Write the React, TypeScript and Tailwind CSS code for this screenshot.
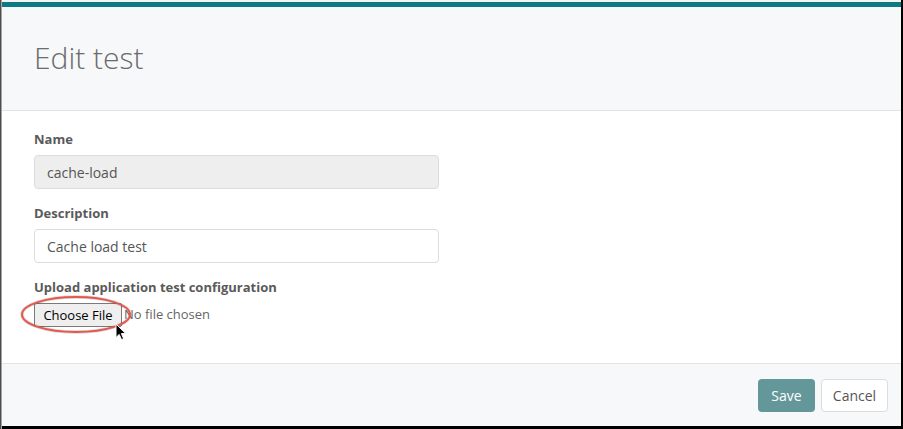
import React from "react";

const font = { fontFamily: '"Open Sans", "Liberation Sans", sans-serif' };

function Field({ label, value, disabled }: { label: string; value: string; disabled?: boolean }) {
  return (
    <div className="flex flex-col mb-[15px]">
      <label className="text-[13px] leading-[18px] font-bold text-[#5a5a5a] mb-[7px]">{label}</label>
      <div
        className={`w-[405px] h-[34px] rounded-[4px] border border-[#dcdcdc] px-[12px] flex items-center text-[14px] text-[#555] ${
          disabled ? "bg-[#eeeeee]" : "bg-white"
        }`}
      >
        {value}
      </div>
    </div>
  );
}

export default function App() {
  return (
    <div style={font} className="w-[903px] h-[429px] flex bg-white overflow-hidden">
      {/* left window edge */}
      <div className="w-[1px] bg-[#4d4d4d]" />
      <div className="w-[1px] bg-[#a3a3a3]" />

      <div className="flex-1 flex flex-col border-b-[3px] border-black">
        <div className="h-[2px] bg-[#f4f4f4]" />
        <div className="h-[5px] bg-[#0b7a83]" />

        {/* Header */}
        <div className="h-[104px] bg-[#f7f8fa] border-b border-[#e3e3e3] pl-[32px] pt-[33px]">
          <h1 className="text-[30px] leading-[36px] font-light text-[#6b6b6b]">Edit test</h1>
        </div>

        {/* Body */}
        <div className="flex-1 pl-[32px] pt-[19px]">
          <Field label="Name" value="cache-load" disabled />
          <Field label="Description" value="Cache load test" />
          <div className="flex flex-col">
            <label className="text-[13px] leading-[18px] font-bold text-[#5a5a5a] mb-[6px]">
              Upload application test configuration
            </label>
            <div className="flex items-center gap-[2px]">
              <div className="relative">
                <button className="w-[88px] h-[24px] rounded-[2px] border border-[#7a7a7a] bg-[#efefef] text-[13px] leading-[22px] text-black">
                  Choose File
                </button>
                <svg
                  className="absolute left-[-14px] top-[-7px] pointer-events-none"
                  width="112"
                  height="39"
                  viewBox="0 0 112 39"
                >
                  <ellipse cx="56" cy="19.5" rx="54" ry="17.5" fill="none" stroke="#000" strokeOpacity="0.15" strokeWidth="3.5" />
                  <ellipse cx="56" cy="19.5" rx="54" ry="17.5" fill="none" stroke="#e8574d" strokeWidth="2" />
                </svg>
                <svg
                  className="absolute left-[81px] top-[21px] pointer-events-none"
                  width="12"
                  height="18"
                  viewBox="0 0 12 18"
                >
                  <path
                    d="M1 1 L1 14.5 L4.2 11.4 L6.5 16.6 L8.6 15.7 L6.4 10.6 L10.8 10.6 Z"
                    fill="#000"
                    stroke="#fff"
                    strokeWidth="1"
                    strokeLinejoin="round"
                  />
                </svg>
              </div>
              <span className="text-[13px] text-[#666]">No file chosen</span>
            </div>
          </div>
        </div>

        {/* Footer */}
        <div className="h-[63px] bg-[#f7f8fa] border-t border-[#e3e3e3] flex items-center justify-end gap-[6px] pr-[13px]">
          <button className="w-[57px] h-[33px] rounded-[4px] bg-[#64979a] text-white text-[14px]">Save</button>
          <button className="w-[67px] h-[33px] rounded-[4px] bg-white border border-[#dcdcdc] text-[#555] text-[14px]">
            Cancel
          </button>
        </div>
      </div>

      {/* right window edge */}
      <div className="w-[2px] bg-black" />
    </div>
  );
}
